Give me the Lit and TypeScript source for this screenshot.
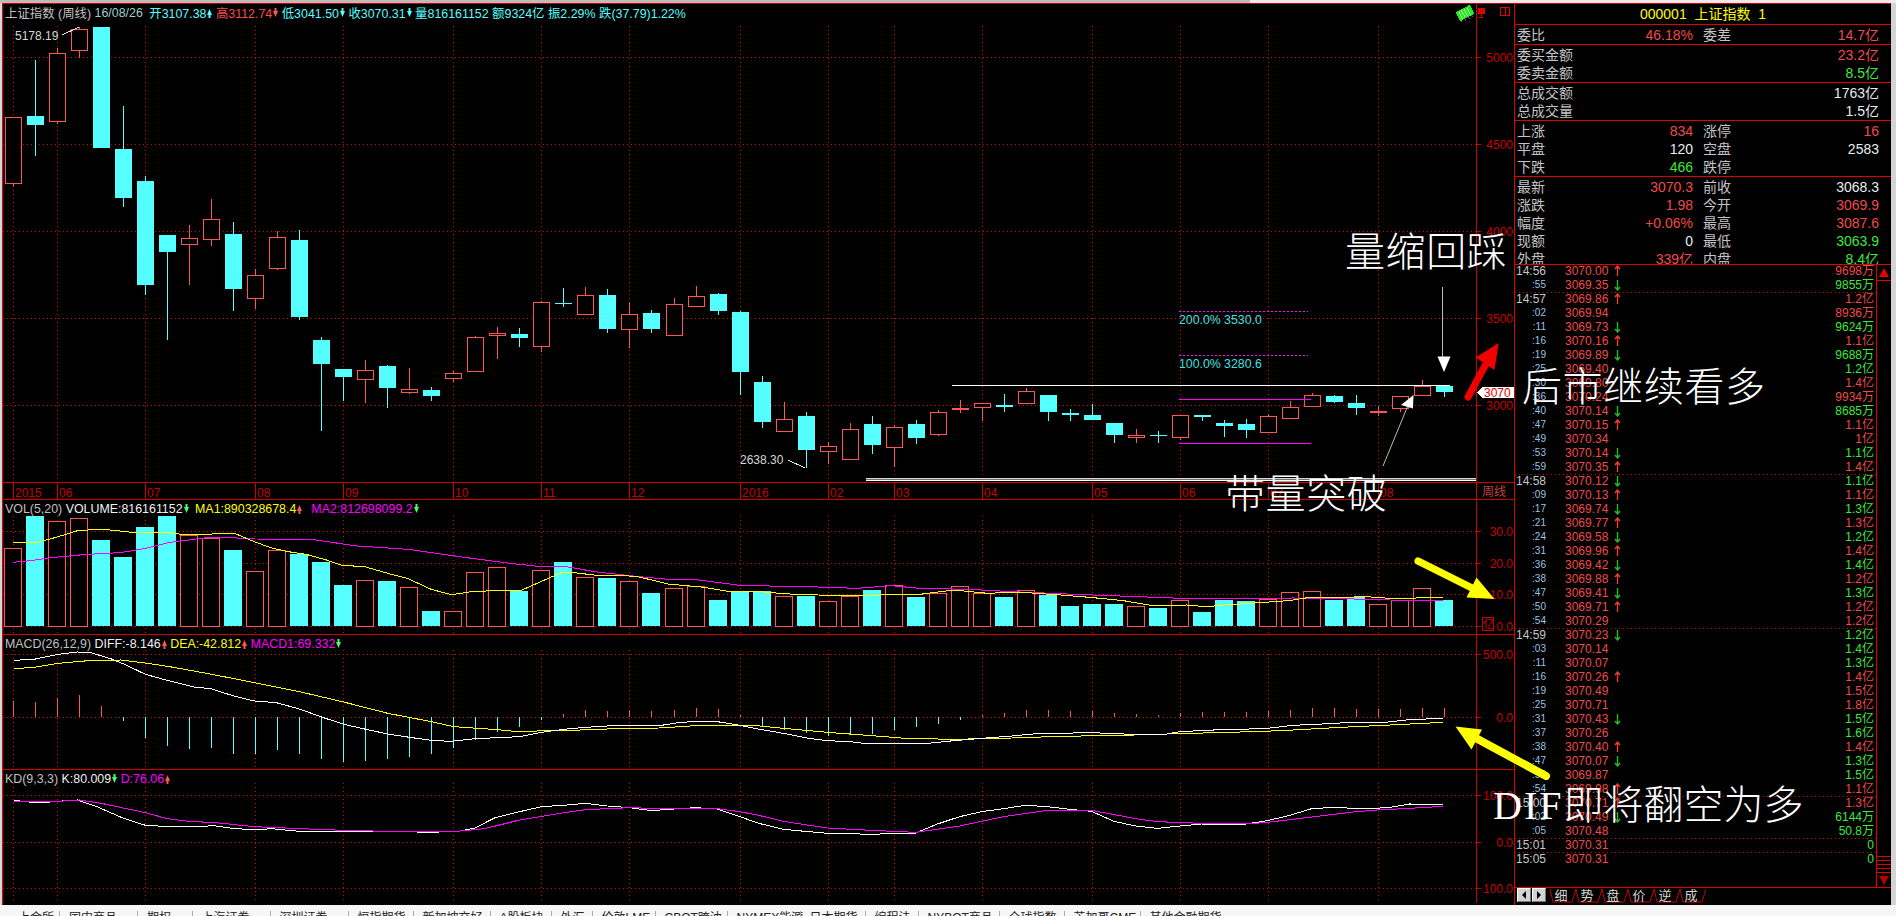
import { LitElement, html, svg, css } from 'lit';
import { customElement } from 'lit/decorators.js';

const RED = '#ff5555';
const CYAN = '#55ffff';

// hi, body top, body bottom, lo, colour (page pixels)
type Bar = [number, number, number, number, 'r' | 'c'];
const CANDLES: Bar[] = [
  [117, 117, 183, 186, 'r'], [60, 116, 125, 156, 'c'], [48, 53, 121, 124, 'r'], [27, 29, 50, 58, 'r'],
  [27, 27, 148, 148, 'c'], [106, 149, 198, 207, 'c'], [176, 181, 285, 295, 'c'], [235, 235, 252, 340, 'c'],
  [225, 238, 244, 285, 'r'], [199, 219, 239, 246, 'r'], [222, 234, 289, 311, 'c'], [269, 275, 298, 309, 'r'],
  [231, 237, 268, 270, 'r'], [230, 240, 317, 320, 'c'], [337, 340, 364, 431, 'c'], [369, 369, 377, 401, 'c'],
  [360, 370, 379, 403, 'r'], [365, 366, 388, 408, 'c'], [368, 389, 392, 394, 'r'], [387, 390, 396, 401, 'c'],
  [371, 373, 378, 382, 'r'], [336, 337, 371, 372, 'r'], [327, 333, 335, 359, 'r'], [328, 334, 338, 347, 'c'],
  [301, 302, 346, 352, 'r'], [288, 303, 304, 307, 'c'], [287, 295, 314, 315, 'r'], [289, 295, 329, 333, 'c'],
  [302, 314, 329, 348, 'r'], [310, 313, 329, 333, 'c'], [298, 304, 335, 335, 'r'], [286, 296, 306, 306, 'r'],
  [293, 294, 311, 315, 'c'], [311, 312, 372, 395, 'c'], [376, 382, 422, 428, 'c'], [402, 419, 431, 432, 'r'],
  [412, 416, 450, 468, 'c'], [442, 446, 451, 464, 'r'], [423, 429, 459, 460, 'r'], [416, 424, 445, 454, 'c'],
  [425, 427, 447, 467, 'r'], [420, 424, 438, 444, 'c'], [410, 412, 434, 436, 'r'], [400, 408, 408, 413, 'r'],
  [403, 403, 407, 421, 'r'], [394, 405, 407, 412, 'c'], [388, 391, 403, 404, 'r'], [395, 395, 412, 421, 'c'],
  [409, 413, 415, 421, 'c'], [404, 415, 420, 420, 'c'], [423, 423, 435, 443, 'c'], [429, 435, 437, 443, 'r'],
  [431, 435, 436, 443, 'c'], [415, 415, 437, 440, 'r'], [415, 415, 417, 421, 'c'], [420, 423, 426, 437, 'c'],
  [419, 424, 430, 438, 'c'], [414, 416, 432, 432, 'r'], [401, 407, 418, 418, 'r'], [393, 395, 406, 407, 'r'],
  [395, 396, 402, 403, 'c'], [395, 403, 408, 415, 'c'], [406, 411, 411, 416, 'r'], [396, 396, 408, 412, 'r'],
  [380, 386, 395, 395, 'r'], [385, 386, 392, 397, 'c'],
];
const VOL_TOPS = [
  548, 516, 521, 518, 540, 557, 527, 516, 535, 538, 550, 571, 550, 554, 562, 585, 580, 581, 587, 611, 611, 572,
  567, 591, 570, 562, 577, 578, 581, 593, 588, 586, 600, 592, 591, 596, 596, 601, 596, 590, 585, 597, 593, 586,
  593, 597, 590, 595, 606, 604, 604, 606, 608, 600, 612, 600, 601, 599, 592, 591, 600, 597, 604, 600, 588, 600,
];
const MACD_ENDS = [
  701, 702, 698, 695, 706, 721, 738, 746, 749, 748, 754, 754, 750, 754, 759, 762, 761, 759, 757, 754, 748, 740,
  732, 727, 720, 714, 710, 711, 710, 711, 710, 708, 709, 715, 726, 730, 733, 736, 734, 734, 730, 727, 724, 720,
  715, 713, 710, 710, 711, 711, 713, 714, 715, 713, 712, 712, 712, 711, 710, 708, 708, 709, 709, 709, 708, 708,
];
const GRID_X = [0, 2, 6, 11, 15, 20, 24, 28, 33, 37, 40, 44, 49, 53, 57, 62];
const MONTHS = ['2015', '06', '07', '08', '09', '10', '11', '12', '2016', '02', '03', '04', '05', '06', '07', '08'];
const cx = (i: number) => Math.round(13.2 + 22.01 * i);

// curves were read off 3x crops, so they stay in crop units and get mapped here
const curve = (left: number[], right: number[], lx: number, ly: number, rx: number, ry: number) => {
  const out: string[] = [];
  for (let i = 0; i < left.length; i += 2) out.push(`${left[i] / lx},${ly + left[i + 1] / 3}`);
  for (let i = 0; i < right.length; i += 2) out.push(`${760 + right[i] / rx},${ry + right[i + 1] / 3}`);
  return out.join(' ');
};
const low = (a: number[], b: number[]) => curve(a, b, 2.063, 620, 2.063, 620);
const volCurve = (a: number[], b: number[]) => curve(a, b, 1.96, 500, 2.063, 260);

const MA1 = volCurve(
  [25, 127, 70, 128, 110, 112, 150, 93, 180, 89, 208, 89, 235, 93, 265, 98, 330, 97, 350, 102, 390, 104, 440, 100, 460, 100, 490, 120, 530, 143, 565, 155, 600, 163, 640, 180, 670, 196, 715, 200, 760, 220, 800, 236, 845, 268, 885, 284, 920, 276, 965, 272, 1020, 272, 1060, 245, 1100, 218, 1125, 218, 1170, 226, 1215, 226, 1250, 230, 1310, 252, 1380, 262, 1430, 275, 1480, 274, 1530, 280, 1568, 284],
  [120, 1005, 210, 1008, 270, 1003, 330, 1003, 400, 990, 470, 1000, 530, 996, 620, 1005, 680, 1012, 750, 1022, 810, 1037, 880, 1035, 920, 1040, 960, 1035, 1040, 1027, 1090, 1022, 1130, 1013, 1200, 1012, 1250, 1010, 1300, 1015, 1410, 1013],
);
const MA2 = volCurve(
  [25, 187, 60, 182, 100, 173, 170, 163, 215, 160, 250, 155, 285, 145, 330, 128, 400, 114, 440, 112, 500, 117, 610, 118, 700, 138, 800, 148, 900, 170, 1000, 190, 1060, 200, 1110, 200, 1170, 216, 1240, 228, 1310, 238, 1370, 240, 1450, 256, 1568, 260],
  [100, 980, 200, 985, 270, 977, 330, 985, 430, 988, 520, 995, 650, 1003, 780, 1010, 870, 1015, 1000, 1016, 1100, 1014, 1200, 1016, 1300, 1020, 1410, 1022],
);
const DIF = low(
  [28, 121, 70, 118, 120, 103, 160, 96, 190, 99, 230, 117, 260, 135, 300, 163, 350, 183, 400, 201, 435, 206, 480, 227, 525, 243, 570, 248, 620, 268, 665, 292, 710, 313, 755, 328, 800, 342, 845, 352, 890, 361, 930, 364, 981, 356, 1072, 350, 1117, 337, 1163, 328, 1208, 322, 1253, 318, 1360, 317, 1400, 308, 1435, 304, 1480, 305, 1526, 316, 1568, 328],
  [48, 340, 100, 355, 139, 362, 185, 365, 220, 371, 340, 371, 400, 362, 457, 355, 520, 348, 570, 341, 684, 338, 750, 342, 840, 342, 866, 335, 950, 329, 1040, 326, 1100, 316, 1160, 312, 1220, 307, 1290, 307, 1340, 299, 1410, 295],
);
const DEA = low(
  [28, 146, 70, 142, 120, 130, 190, 121, 250, 120, 300, 129, 350, 140, 430, 161, 525, 188, 618, 215, 709, 246, 800, 280, 890, 305, 936, 320, 1026, 329, 1060, 334, 1160, 332, 1253, 327, 1360, 324, 1435, 317, 1526, 316, 1568, 318],
  [48, 325, 139, 337, 230, 347, 300, 355, 400, 358, 520, 354, 620, 349, 750, 346, 840, 342, 940, 338, 1040, 334, 1100, 330, 1200, 322, 1300, 315, 1410, 307],
);
const KD_K = low(
  [28, 541, 80, 549, 118, 544, 160, 540, 200, 560, 250, 592, 300, 616, 350, 620, 410, 620, 440, 617, 475, 624, 525, 630, 560, 626, 610, 633, 700, 633, 800, 634, 890, 637, 950, 633, 980, 624, 1020, 594, 1072, 575, 1117, 560, 1163, 556, 1208, 550, 1253, 558, 1299, 563, 1344, 572, 1400, 566, 1435, 563, 1480, 567, 1526, 590, 1568, 611],
  [48, 628, 93, 634, 139, 640, 184, 640, 230, 644, 275, 639, 321, 639, 366, 612, 412, 590, 457, 575, 502, 566, 548, 556, 593, 560, 639, 568, 684, 574, 730, 604, 775, 618, 820, 625, 866, 618, 911, 612, 1002, 612, 1047, 602, 1093, 586, 1138, 566, 1184, 562, 1250, 567, 1300, 562, 1340, 552, 1410, 553],
);
const KD_D = low(
  [28, 543, 118, 544, 164, 540, 209, 550, 300, 578, 345, 596, 390, 604, 445, 608, 525, 620, 620, 626, 709, 631, 800, 634, 890, 635, 950, 633, 1000, 626, 1072, 600, 1163, 578, 1208, 569, 1299, 563, 1390, 567, 1480, 566, 1526, 575, 1568, 587],
  [48, 604, 93, 614, 139, 624, 230, 631, 321, 637, 412, 618, 502, 590, 593, 571, 684, 571, 775, 596, 820, 605, 911, 610, 1002, 612, 1047, 607, 1138, 591, 1230, 575, 1274, 570, 1340, 565, 1410, 559],
);

// small spike that follows each legend value
const spike = (up: boolean, color: string) => html`<svg class="spike" viewBox="0 0 5 10" fill=${color}>
  <path d=${up ? 'M2.5 1L5 7H3.5V10H1.5V7H0Z' : 'M2.5 9L5 3H3.5V0H1.5V3H0Z'}></path></svg>`;

const gridLines = (ys: number[], x1: number, y1: number, y2: number, labels: string[]) => svg`
  ${GRID_X.map((i) => svg`<line class="dot" x1=${cx(i) + 0.5} x2=${cx(i) + 0.5} y1=${y1} y2=${y2}></line>`)}
  ${ys.map((y, n) => svg`
    <line class="dot" x1=${x1} x2="1476" y1=${y + 0.5} y2=${y + 0.5}></line>
    <line class="axis" x1="1476" x2="1481" y1=${y + 0.5} y2=${y + 0.5}></line>
    <text class="scale" x="1513" y=${y + 4.5}>${labels[n]}</text>`)}`;

@customElement('kline-charts')
export class KlineCharts extends LitElement {
  static styles = css`
    :host { display: flex; flex-direction: column; width: 1511px; height: 902px; background: #000; border-left: 1px solid #e00000; font-family: "Liberation Sans", "Noto Sans CJK SC", sans-serif; font-size: 12px; }
    .panel { position: relative; border-top: 1px solid #d00000; overflow: hidden; }
    svg.chart { display: block; shape-rendering: crispEdges; }
    .legend { position: absolute; left: 2px; top: 0; height: 18px; display: flex; align-items: center; white-space: nowrap; color: #c0c0c0; font-size: 12.4px; }
    .legend span { display: inline-flex; align-items: center; margin-right: 3.5px; }
    .legend span.gap-m { margin-right: 6.5px; }
    .legend span.gap-l { margin-right: 9px; }
    .spike { width: 5px; height: 10px; margin-left: 1px; }
    .c { color: #55ffff; } .r { color: #ff4848; } .w { color: #f0f0f0; } .y { color: #ffff00; } .m { color: #ff00ff; } .d { color: #9fcfcf; }
    .dot { stroke: #e00000; stroke-width: 1; stroke-dasharray: 1 3; }
    .axis { stroke: #c80000; stroke-width: 1; }
    .scale { fill: #c80000; font-size: 12px; text-anchor: end; shape-rendering: auto; }
    .month { fill: #c80000; font-size: 12px; }
    .label { fill: #d8d8d8; font-size: 12px; }
    .fib { fill: #40e0e0; font-size: 12.3px; }
    .tag { fill: #e00000; font-size: 12px; }
    .period { fill: #c04040; font-size: 12px; }
  `;

  frame(top: number, bottom: number, body: unknown, legend: unknown = '') {
    const h = bottom - top - 1;
    return html`<div class="panel">
      <svg class="chart" width="1511" height=${h} viewBox="3 ${top + 1} 1511 ${h}">${body}</svg>
      ${legend ? html`<div class="legend">${legend}</div>` : ''}
    </div>`;
  }

  candles() {
    return CANDLES.map(([hi, t, b, lo, c], i) => {
      const x = cx(i);
      const col = c === 'r' ? RED : CYAN;
      return svg`
        <line x1=${x + 0.5} x2=${x + 0.5} y1=${hi} y2=${lo} stroke=${col}></line>
        ${c === 'c'
          ? svg`<rect x=${x - 8} y=${t} width="17" height=${Math.max(b - t, 1)} fill=${col}></rect>`
          : svg`<rect x=${x - 7.5} y=${t + 0.5} width="16" height=${Math.max(b - t, 1)} fill="#000" stroke=${col}></rect>`}`;
    });
  }

  mainChart() {
    return svg`
      ${gridLines([57, 144, 231, 318, 405], 3, 26, 482, ['5000', '4500', '4000', '3500', '3000'])}
      <line class="axis" x1="1476.5" x2="1476.5" y1="4" y2="482"></line>
      ${this.candles()}
      <text class="label" x="15" y="40">5178.19</text>
      <path d="M62 35L79 27" stroke="#e8e8e8" fill="none"></path>
      <text class="label" x="740" y="464">2638.30</text>
      <path d="M788 460L805 468" stroke="#e8e8e8" fill="none"></path>
      <line x1="1179" x2="1308" y1="311.5" y2="311.5" stroke="#ff00ff" stroke-dasharray="2 2"></line>
      <text class="fib" x="1179" y="324">200.0% 3530.0</text>
      <line x1="1179" x2="1308" y1="355.5" y2="355.5" stroke="#ff00ff" stroke-dasharray="2 2"></line>
      <text class="fib" x="1179" y="368">100.0% 3280.6</text>
      <line x1="1179" x2="1311" y1="399.5" y2="399.5" stroke="#ff00ff"></line>
      <line x1="1179" x2="1311" y1="443.5" y2="443.5" stroke="#ff00ff"></line>
      <rect x="952" y="385" width="498" height="1" fill="#fff"></rect>
      <rect x="866" y="478" width="610" height="1" fill="#d8d8d8"></rect>
      <rect x="866" y="479" width="610" height="1" fill="#707078"></rect>
      <rect x="866" y="480" width="610" height="1" fill="#fff"></rect>
      <g transform="translate(1465 13) rotate(-28)">
        <rect x="-8" y="-5" width="16" height="10" fill="#22ee22"></rect>
        <path d="M-5 -4V4M-2 -4V4M1 -4V4M4 -4V4" stroke="#b8ffb8"></path>
        <path d="M-7 5v2M-3 5v2M1 5v2M5 5v2" stroke="#555"></path>
      </g>
      <path d="M1478 8h6v5h-6zM1481 13v4M1479 17h4" fill="#e00000" stroke="#e00000"></path>
      <rect x="1500.5" y="7.5" width="9" height="8" fill="none" stroke="#e00000"></rect>
      <line x1="1505" x2="1505" y1="7" y2="16" stroke="#e00000"></line>
      <polygon points="1477,392.5 1482,387 1514,387 1514,398 1482,398" fill="#fff"></polygon>
      <text class="tag" x="1484" y="397">3070</text>`;
  }

  timeAxis() {
    return svg`
      ${GRID_X.map((i, n) => svg`
        <line class="axis" x1=${cx(i) + 0.5} x2=${cx(i) + 0.5} y1="483" y2="499"></line>
        <text class="month" x=${cx(i) + 2} y="497">${MONTHS[n]}</text>`)}
      <line class="axis" x1="1476.5" x2="1476.5" y1="483" y2="499"></line>
      <text class="period" x="1482" y="496">周线</text>`;
  }

  volume() {
    return svg`
      ${gridLines([531, 563, 594, 626], 3, 516, 634, ['30.0', '20.0', '10.0', '0.0'])}
      <line class="axis" x1="1476.5" x2="1476.5" y1="500" y2="634"></line>
      ${VOL_TOPS.map((top, i) => {
        const x = cx(i);
        return CANDLES[i][4] === 'c'
          ? svg`<rect x=${x - 9} y=${top} width="18" height=${626 - top} fill=${CYAN}></rect>`
          : svg`<rect x=${x - 8.5} y=${top + 0.5} width="17" height=${626 - top} fill="#000" stroke=${RED}></rect>`;
      })}
      <polyline points=${MA2} fill="none" stroke="#ff00ff"></polyline>
      <polyline points=${MA1} fill="none" stroke="#ffff00"></polyline>
      <rect x="1482.5" y="617.5" width="11" height="13" fill="#000" stroke="#c80000"></rect>
      <text class="month" x="1483" y="629">亿</text>`;
  }

  macd() {
    return svg`
      ${gridLines([654, 717], 3, 650, 769, ['500.0', '0.0'])}
      <line class="axis" x1="1476.5" x2="1476.5" y1="635" y2="769"></line>
      ${MACD_ENDS.map((end, i) => svg`<line x1=${cx(i) + 0.5} x2=${cx(i) + 0.5} y1="717" y2=${end}
        stroke=${end < 717 ? RED : CYAN}></line>`)}
      <polyline points=${DEA} fill="none" stroke="#ffff00"></polyline>
      <polyline points=${DIF} fill="none" stroke="#fff"></polyline>`;
  }

  kd() {
    return svg`
      ${gridLines([795, 842, 888], 3, 783, 903, ['100.0', '0.0', '100.0'])}
      <line class="axis" x1="1476.5" x2="1476.5" y1="770" y2="903"></line>
      <polyline points=${KD_K} fill="none" stroke="#fff"></polyline>
      <polyline points=${KD_D} fill="none" stroke="#ff00ff"></polyline>`;
  }

  render() {
    return html`
      ${this.frame(3, 482, this.mainChart(), html`
        <span>上证指数 (周线)</span><span class="d gap-m">16/08/26</span>
        <span class="c">开3107.38${spike(true, CYAN)}</span>
        <span class="r">高3112.74${spike(false, RED)}</span>
        <span class="c">低3041.50${spike(false, CYAN)}</span>
        <span class="c">收3070.31${spike(false, CYAN)}</span>
        <span class="c">量816161152</span><span class="c">额9324亿</span>
        <span class="c">振2.29%</span><span class="c">跌(37.79)1.22%</span>`)}
      ${this.frame(482, 499, this.timeAxis())}
      ${this.frame(499, 634, this.volume(), html`
        <span>VOL(5,20)</span>
        <span class="w gap-m">VOLUME:816161152${spike(false, '#44ff66')}</span>
        <span class="y gap-l">MA1:890328678.4${spike(true, RED)}</span>
        <span class="m">MA2:812698099.2${spike(false, '#44ff66')}</span>`)}
      ${this.frame(634, 769, this.macd(), html`
        <span>MACD(26,12,9)</span>
        <span class="w">DIFF:-8.146${spike(true, RED)}</span>
        <span class="y">DEA:-42.812${spike(true, RED)}</span>
        <span class="m">MACD1:69.332${spike(false, '#44ff66')}</span>`)}
      ${this.frame(769, 903, this.kd(), html`
        <span>KD(9,3,3)</span>
        <span class="w">K:80.009${spike(false, '#44ff66')}</span>
        <span class="m">D:76.06${spike(true, RED)}</span>`)}
    `;
  }
}

// time, price, arrow, amount, colour of the amount
type Tick = [string, string, '' | 'u' | 'd', string, 'r' | 'g'];
const TICKS: Tick[] = [
  ['14:56', '3070.00', 'u', '9698万', 'r'], [':55', '3069.35', 'd', '9855万', 'g'], ['14:57', '3069.86', 'u', '1.2亿', 'r'],
  [':02', '3069.94', '', '8936万', 'r'], [':11', '3069.73', 'd', '9624万', 'g'], [':16', '3070.16', 'u', '1.1亿', 'r'],
  [':19', '3069.89', 'd', '9688万', 'g'], [':25', '3069.40', '', '1.2亿', 'g'], [':30', '3069.80', '', '1.4亿', 'r'],
  [':36', '3070.24', '', '9934万', 'r'], [':40', '3070.14', 'd', '8685万', 'g'], [':47', '3070.15', 'u', '1.1亿', 'r'],
  [':49', '3070.34', '', '1亿', 'r'], [':53', '3070.14', 'd', '1.1亿', 'g'], [':59', '3070.35', 'u', '1.4亿', 'r'],
  ['14:58', '3070.12', 'd', '1.1亿', 'g'], [':09', '3070.13', 'u', '1.1亿', 'r'], [':17', '3069.74', 'd', '1.3亿', 'g'],
  [':21', '3069.77', 'u', '1.3亿', 'r'], [':24', '3069.58', 'd', '1.2亿', 'g'], [':31', '3069.96', 'u', '1.4亿', 'r'],
  [':36', '3069.42', 'd', '1.4亿', 'g'], [':38', '3069.88', 'u', '1.2亿', 'r'], [':47', '3069.41', 'd', '1.3亿', 'g'],
  [':50', '3069.71', 'u', '1.2亿', 'r'], [':54', '3070.29', '', '1.2亿', 'r'], ['14:59', '3070.23', 'd', '1.2亿', 'g'],
  [':03', '3070.14', '', '1.4亿', 'g'], [':11', '3070.07', '', '1.3亿', 'g'], [':16', '3070.26', 'u', '1.4亿', 'r'],
  [':19', '3070.49', '', '1.5亿', 'r'], [':25', '3070.71', '', '1.8亿', 'r'], [':31', '3070.43', 'd', '1.5亿', 'g'],
  [':37', '3070.26', '', '1.6亿', 'g'], [':38', '3070.40', 'u', '1.4亿', 'r'], [':47', '3070.07', 'd', '1.3亿', 'g'],
  [':50', '3069.87', '', '1.5亿', 'g'], [':54', '3069.98', 'u', '1.1亿', 'r'], ['15:00', '3070.71', 'u', '1.3亿', 'r'],
  [':02', '3070.49', 'd', '6144万', 'g'], [':05', '3070.48', '', '50.8万', 'g'], ['15:01', '3070.31', '', '0', 'g'],
  ['15:05', '3070.31', '', '0', 'g'],
];

// label, value, colour, then the same for the right half (a '' label leaves it empty)
type Stat = [string, string, string, string, string, string];
const STATS: { rows: Stat[]; cls?: string }[] = [
  { rows: [['委比', '46.18%', 'r', '委差', '14.7亿', 'r']] },
  { rows: [['委买金额', '', '', '', '23.2亿', 'r'], ['委卖金额', '', '', '', '8.5亿', 'g']] },
  { rows: [['总成交额', '', '', '', '1763亿', 'w'], ['总成交量', '', '', '', '1.5亿', 'w']] },
  { rows: [['上涨', '834', 'r', '涨停', '16', 'r'], ['平盘', '120', 'w', '空盘', '2583', 'w'], ['下跌', '466', 'g', '跌停', '', '']] },
  {
    cls: 'clip',
    rows: [
      ['最新', '3070.3', 'r', '前收', '3068.3', 'w'], ['涨跌', '1.98', 'r', '今开', '3069.9', 'r'],
      ['幅度', '+0.06%', 'r', '最高', '3087.6', 'r'], ['现额', '0', 'w', '最低', '3063.9', 'g'],
      ['外盘', '339亿', 'r', '内盘', '8.4亿', 'g'],
    ],
  },
];
const SHEET_TABS = ['细', '势', '盘', '价', '逆', '成'];

@customElement('quote-panel')
export class QuotePanel extends LitElement {
  static styles = css`
    :host { display: flex; flex-direction: column; box-sizing: border-box; width: 377px; height: 902px; background: #000; border-left: 1px solid #e00000; font-family: "Liberation Sans", "Noto Sans CJK SC", sans-serif; color: #c4c4c4; }
    .title { height: 22px; box-sizing: border-box; border-top: 1px solid #e00000; border-bottom: 1px solid #e00000; color: #ffff00; font-size: 14px; line-height: 20px; text-align: center; white-space: pre; flex: none; }
    .sect { box-sizing: border-box; padding-top: 1px; border-bottom: 1px solid #e00000; flex: none; }
    .sect.clip { height: 88px; overflow: hidden; }
    .row { display: grid; grid-template-columns: 60px 116px 60px 126px; height: 18px; padding-left: 2px; font-size: 14px; line-height: 18px; }
    .row .v { text-align: right; }
    .row .l2 { padding-left: 10px; }
    .r { color: #f04a4a; } .g { color: #3ee83e; } .w { color: #e4eeee; }
    .ticks { flex: 1; display: flex; min-height: 0; border-bottom: 1px solid #e00000; }
    .list { flex: 1; margin-top: -1px; overflow: hidden; }
    .tick { display: grid; grid-template-columns: 31px 68px 10px 1fr; height: 14px; line-height: 14px; font-size: 12px; padding-right: 2px; }
    .tick.group { background: repeating-linear-gradient(90deg, #d00000 0 1px, transparent 1px 4px) top / 100% 1px no-repeat; }
    .time { text-align: right; color: #c0c8cc; }
    .time.sec { font-size: 10px; color: #9cc4e4; }
    .price { padding-left: 19px; color: #f04a4a; }
    .tick .amt { text-align: right; }
    .arrow { width: 7px; height: 12px; margin-top: 1px; }
    .scroll { width: 15px; flex: none; box-sizing: border-box; border-left: 1px solid #e00000; display: flex; flex-direction: column; }
    .btn { height: 16px; border-bottom: 1px solid #e00000; display: flex; align-items: center; justify-content: center; box-sizing: border-box; }
    .btn.down { height: 15px; border-bottom: 0; border-top: 1px solid #e00000; }
    .tri { width: 0; height: 0; border-left: 5px solid transparent; border-right: 5px solid transparent; }
    .tri.up { border-bottom: 9px solid #e60000; }
    .tri.dn { border-top: 9px solid #b00000; }
    .track { flex: 1; }
    .hatch { height: 16px; background: repeating-linear-gradient(180deg, #e00000 0 1px, transparent 1px 4px); }
    .sheets { position: relative; flex: none; height: 17px; display: flex; padding: 0 0 0 2px; }
    .sheets svg { position: absolute; left: 0; top: 0; }
    .arrbtn { width: 14px; height: 14px; box-sizing: border-box; margin-right: 1px; background: #d4d4d4; border: 1px solid; border-color: #fff #777 #777 #fff; display: flex; align-items: center; justify-content: center; }
    .arrbtn i { width: 0; height: 0; border-top: 4px solid transparent; border-bottom: 4px solid transparent; }
    .arrbtn i.lf { border-right: 4px solid #000; }
    .arrbtn i.rt { border-left: 4px solid #000; }
    .tabs { display: flex; margin-left: 1px; }
    .tabs span { position: relative; width: 26px; text-align: center; font-size: 13px; line-height: 15px; color: #d4d4d4; }
  `;

  statRow(r: Stat) {
    return html`<div class="row">
      <span>${r[0]}</span><span class="v ${r[2]}">${r[1]}</span>
      <span class="l2">${r[3]}</span><span class="v ${r[5]}">${r[4]}</span>
    </div>`;
  }

  tickArrow(dir: string) {
    if (!dir) return html`<span></span>`;
    const up = dir === 'u';
    return html`<svg class="arrow" viewBox="0 0 7 12" fill="none" stroke=${up ? '#f03c30' : '#28b828'} stroke-width="1.4">
      <path d=${up ? 'M3.5 11V1.5M1 4L3.5 1L6 4' : 'M3.5 1V10.5M1 8L3.5 11L6 8'}></path></svg>`;
  }

  render() {
    return html`
      <div class="title">000001  上证指数  1</div>
      ${STATS.map((s) => html`<div class="sect ${s.cls ?? ''}">${s.rows.map((r) => this.statRow(r))}</div>`)}
      <div class="ticks">
        <div class="list">
          ${TICKS.map((t) => html`<div class="tick ${t[0].length > 3 ? 'group' : ''}">
            <span class="time ${t[0].length > 3 ? '' : 'sec'}">${t[0]}</span>
            <span class="price">${t[1]}</span>
            ${this.tickArrow(t[2])}
            <span class="amt ${t[4]}">${t[3]}</span>
          </div>`)}
        </div>
        <div class="scroll">
          <div class="btn"><div class="tri up"></div></div>
          <div class="track"></div>
          <div class="hatch"></div>
          <div class="btn down"><div class="tri dn"></div></div>
        </div>
      </div>
      <div class="sheets">
        <svg width="376" height="17" viewBox="0 0 376 17" fill="none" stroke="#c80000">
          ${SHEET_TABS.map((_, k) => {
            const x = 35 + 26 * k;
            return svg`<path d="M${x} 1L${x + 3} 14H${x + 22}L${x + 26} 1"></path>`;
          })}
        </svg>
        <div class="arrbtn"><i class="lf"></i></div>
        <div class="arrbtn"><i class="rt"></i></div>
        <div class="tabs">${SHEET_TABS.map((t) => html`<span>${t}</span>`)}</div>
      </div>
    `;
  }
}

// exchange tabs along the bottom, with the width each one takes
const MARKETS: [string, number][] = [
  ['上金所', 59], ['国内商品', 78], ['期权', 54.5], ['上海证券', 78], ['深圳证券', 78], ['恒指期货', 65], ['新加坡交好', 77],
  ['A股板块', 61], ['外汇', 41], ['伦敦LME', 63], ['CBOT跨油', 72], ['NYMEX能源', 73], ['日本期货', 65], ['编程法', 53],
  ['NYBOT商品', 81], ['全球指数', 65], ['芝加哥CME', 76], ['其他金融期货', 100],
];

@customElement('app-root')
export class AppRoot extends LitElement {
  static styles = css`
    :host { display: block; position: relative; width: 1896px; height: 916px; overflow: hidden; background: #f6f6f6; font-family: "Liberation Sans", "Noto Sans CJK SC", sans-serif; }
    .strip { display: flex; height: 3px; }
    .strip .dark { width: 1250px; background: #bcbcbc; }
    .strip .light { flex: 1; background: #ececec; }
    .body { display: flex; height: 902px; }
    .gutter { width: 2px; background: #d8d8d8; }
    .margin { flex: 1; background: #d4d4d4; }
    .markets { display: flex; height: 11px; overflow: hidden; padding-top: 6px; box-sizing: border-box; }
    .market { box-sizing: border-box; flex: none; padding-left: 9px; border-left: 1px solid #aaa; font-size: 12px; line-height: 15px; color: #222; white-space: nowrap; }
    .market:first-child { border-left: 0; padding-left: 18px; }
    .overlay { position: absolute; left: 0; top: 0; pointer-events: none; }
    .note { position: absolute; color: #fff; font-family: "Liberation Serif", "Noto Sans CJK SC", serif; font-weight: 300; font-size: 40px; line-height: 40px; white-space: nowrap; letter-spacing: 0.6px; }
    .n1 { left: 1345px; top: 233px; }
    .n2 { left: 1522px; top: 368px; }
    .n3 { left: 1225px; top: 475px; }
    .n4 { left: 1493px; top: 786px; letter-spacing: 0; }
    .latin { letter-spacing: 2px; }
  `;

  render() {
    return html`
      <div class="strip"><div class="dark"></div><div class="light"></div></div>
      <div class="body">
        <div class="gutter"></div>
        <kline-charts></kline-charts>
        <quote-panel></quote-panel>
        <div class="margin"></div>
      </div>
      <div class="markets">
        ${MARKETS.map(([name, w]) => html`<div class="market" style="width:${w}px">${name}</div>`)}
      </div>
      <svg class="overlay" width="1896" height="916" viewBox="0 0 1896 916">
        <path d="M1442.5 287V358" stroke="#bbb" fill="none"></path>
        <path d="M1437.5 356.5H1450.5L1444 372Z" fill="#fff"></path>
        <path d="M1383 466L1409 403" stroke="#bbb" fill="none"></path>
        <path d="M1413.5 395L1401 405L1413 408.5Z" fill="#fff"></path>
        <path d="M1468 397L1487 362" stroke="#f00000" stroke-width="7" stroke-linecap="round" fill="none"></path>
        <path d="M1498.7 343L1475.5 357.5L1494.5 370Z" fill="#f00000"></path>
        <path d="M1418 561L1474 589" stroke="#ffff00" stroke-width="7" stroke-linecap="round" fill="none"></path>
        <path d="M1494.5 599L1476.5 577.5L1466.5 597.5Z" fill="#ffff00"></path>
        <path d="M1546 776L1472 736" stroke="#ffff00" stroke-width="8" stroke-linecap="round" fill="none"></path>
        <path d="M1455.5 726.5L1482 729.5L1471.5 749.5Z" fill="#ffff00"></path>
      </svg>
      <div class="note n1">量缩回踩</div>
      <div class="note n2">后市继续看多</div>
      <div class="note n3">带量突破</div>
      <div class="note n4"><span class="latin">DIF</span>即将翻空为多</div>
    `;
  }
}
